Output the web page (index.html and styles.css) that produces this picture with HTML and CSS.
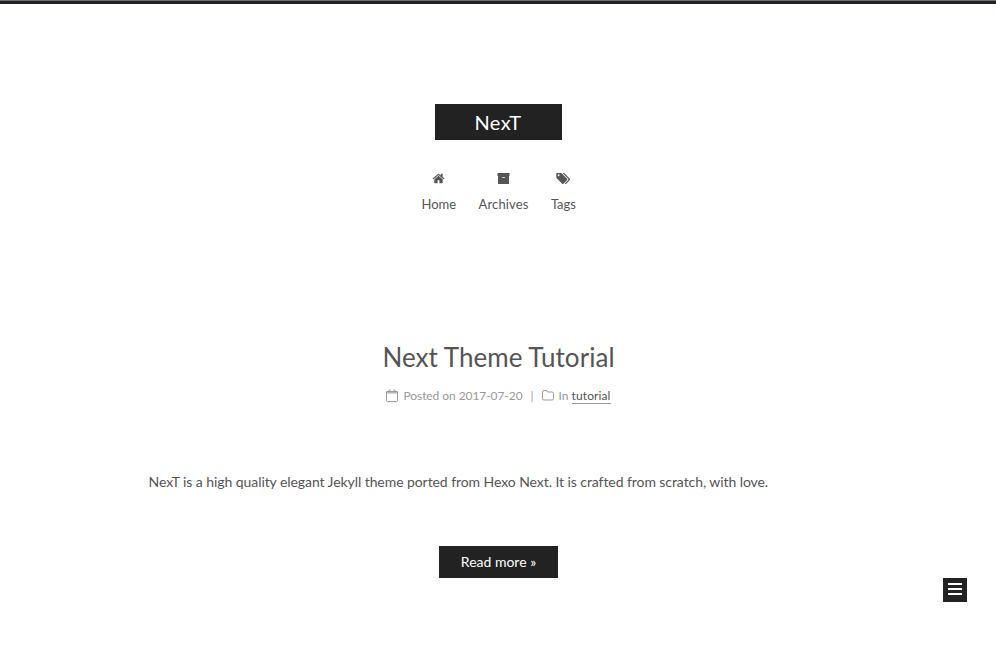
FILE: index.html
```
<!DOCTYPE html>
<html lang="en">
<head>
<meta charset="utf-8">
<title>NexT</title>
<link rel="stylesheet" href="styles.css">
</head>
<body>
<div class="headband"></div>
<header class="header">
  <a class="brand">NexT</a>
  <nav class="menu">
    <a class="menu-item"><svg class="icon" width="13" height="13" viewBox="0 0 1664 1792"><path d="M1408 992v480q0 26-19 45t-45 19H960v-384H704v384H320q-26 0-45-19t-19-45V992q0-1 .5-3t.5-3l575-474 575 474q1 2 1 6zm223-69l-62 74q-8 9-21 11h-3q-13 0-21-7L832 424l-692 577q-12 8-24 7-13-2-21-11l-62-74q-8-10-7-23.500t11-21.500L756 279q32-26 76-26t76 26l244 204V288q0-14 9-23t23-9h192q14 0 23 9t9 23v408l219 182q10 8 11 21.500t-7 23.500z"/></svg><span>Home</span></a>
    <a class="menu-item"><svg class="icon" width="13" height="13" viewBox="0 0 13 13"><path d="M.5 1h12v3H.5zM1 4h11v8H1z"/><path class="slot" d="M5 5h3v1H5z"/></svg><span class="archives">Archives</span></a>
    <a class="menu-item"><svg class="icon" width="15" height="13" viewBox="0 0 1984 1792"><path d="M448 448q0-53-37.500-90.500T320 320t-90.500 37.500T192 448t37.500 90.500T320 576t90.500-37.500T448 448zm1067 576q0 53-37 90l-491 492q-39 37-91 37-53 0-90-37L91 890q-38-37-64.500-101T0 672V256q0-52 38-90t90-38h416q53 0 117 26.500T763 219l715 714q37 39 37 91zm384 0q0 53-37 90l-491 492q-39 37-91 37-36 0-59-14t-53-45l470-470q37-37 37-90 0-52-37-91L923 219q-38-38-102-64.500T704 128h224q53 0 117 26.500t102 64.500l715 714q37 39 37 91z"/></svg><span>Tags</span></a>
  </nav>
</header>
<main class="post">
  <h1 class="title">Next Theme Tutorial</h1>
  <div class="meta">
    <svg class="icon calendar" width="12" height="13" viewBox="0 0 12 13"><path d="M.5 2.500h11v9q0 1-1 1h-9q-1 0-1-1z" fill="none" stroke="currentColor"/><path d="M1 3h10v1.500H1zM2.500 .5h2V3h-2zM7.500 .5h2V3h-2z" opacity=".7"/></svg>
    <span class="date">Posted on 2017-07-20</span><span class="divider">|</span>
    <svg class="icon folder" width="12" height="11" viewBox="0 0 12 11"><path d="M.5 2q0-1.500 1.500-1.500h2q1.500 0 1.500 1.500h4.500q1.500 0 1.500 1.500v5q0 1.500-1.500 1.500h-8q-1.500 0-1.500-1.500z" fill="none" stroke="currentColor"/></svg>
    <span>In <a class="category">tutorial</a></span>
  </div>
  <p class="body">NexT is a high quality elegant Jekyll theme ported from Hexo Next. It is crafted from scratch, with love.</p>
  <a class="more">Read more »</a>
</main>
<button class="toggle" aria-label="Sidebar"><i></i><i></i><i></i></button>
</body>
</html>
```
FILE: styles.css
```
* { box-sizing: border-box; }
body { margin: 0; height: 647px; overflow: hidden; background: #fff; color: #555; font-family: Lato, sans-serif; font-size: 14px; }
.headband { height: 4px; background: #222; border-top: 1px solid #75697a; }
.header { display: flex; flex-direction: column; align-items: center; padding-top: 100px; }
.brand { width: 127px; height: 36px; background: #222; color: #fff; font-size: 20px; line-height: 36px; text-align: center; letter-spacing: .4px; }
.menu { display: flex; gap: 22.500px; margin-top: 32px; padding-left: 1.400px; }
.menu-item { display: flex; flex-direction: column; align-items: center; font-size: 13px; line-height: 18px; gap: 10px; }
.archives { letter-spacing: .12px; }
.icon { display: block; fill: currentColor; }
.slot { fill: #ccc; }
.post { display: flex; flex-direction: column; align-items: center; width: 700px; margin: 125px auto 0; }
.title { margin: 0; padding-left: 1px; font-size: 26px; font-weight: 400; line-height: 39px; letter-spacing: .04px; }
.meta { display: flex; align-items: center; height: 20px; margin-top: 8px; padding-left: 1px; color: #999; font-size: 12px; }
.calendar, .folder { margin-right: 5px; }
.date { letter-spacing: -.07px; }
.divider { margin: 0 8px; }
.category { color: #555; border-bottom: 1px solid #999; letter-spacing: .1px; }
.body { align-self: stretch; margin: 63px 0 0; padding-left: .5px; font-size: 14px; line-height: 28px; letter-spacing: -.071px; }
.more { width: 119px; height: 32px; margin-top: 50px; padding-left: 1px; background: #222; color: #fff; line-height: 32px; text-align: center; }
.toggle { position: fixed; right: 29px; bottom: 45px; display: flex; flex-direction: column; align-items: center; justify-content: center; gap: 3px; width: 24px; height: 24px; padding: 0 0 2px; border: 0; background: #222; }
.toggle i { width: 14px; height: 2px; background: #fff; }
```
